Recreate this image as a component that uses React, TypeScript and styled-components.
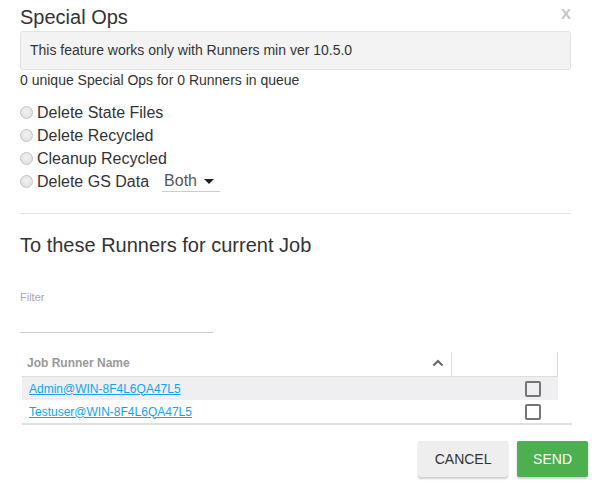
import React from 'react';
import styled, { createGlobalStyle } from 'styled-components';

const GlobalStyle = createGlobalStyle`
  html, body {
    margin: 0;
    padding: 0;
    background: #fff;
    font-family: "Liberation Sans", Arial, sans-serif;
    color: #333;
  }
`;

const Dialog = styled.div`
  position: relative;
  width: 592px;
  height: 483px;
  box-sizing: border-box;
  padding: 5px 21px 0 20px;
`;

const Title = styled.h2`
  margin: 0;
  font-size: 20px;
  font-weight: normal;
  line-height: 24px;
  color: #333;
`;

const Close = styled.span`
  position: absolute;
  top: 5px;
  right: 21px;
  font-size: 15px;
  font-weight: bold;
  line-height: 18px;
  color: #c6c6c6;
`;

const Notice = styled.div`
  margin-top: 2px;
  padding: 9px 9px;
  border: 1px solid #e3e3e3;
  border-radius: 3px;
  background: #f3f3f3;
  font-size: 14px;
  line-height: 19px;
`;

const Count = styled.div`
  font-size: 14px;
  line-height: 19px;
  margin-top: 1px;
`;

const OpList = styled.div`
  margin-top: 11px;
  display: flex;
  flex-direction: column;
`;

const OpRow = styled.label`
  display: flex;
  align-items: center;
  height: 23px;
  font-size: 16px;
`;

const Radio = styled.span`
  width: 11px;
  height: 11px;
  border-radius: 50%;
  border: 1px solid #c4c4c4;
  background: radial-gradient(circle at 50% 40%, #f2f2f2, #dcdcdc);
  margin-right: 4px;
  flex: none;
`;

const Select = styled.span`
  display: inline-flex;
  align-items: center;
  margin-left: 13px;
  padding: 0 6px 0 2px;
  height: 20px;
  border-bottom: 1px solid #ccc;
  color: #555;
  gap: 7px;
`;

const Caret = styled.span`
  width: 0;
  height: 0;
  border-left: 5px solid transparent;
  border-right: 5px solid transparent;
  border-top: 5px solid #222;
`;

const Divider = styled.hr`
  margin: 20px 0 0;
  border: none;
  border-top: 1px solid #e5e5e5;
`;

const Section = styled.h3`
  margin: 19px 0 0;
  font-size: 20px;
  font-weight: normal;
  line-height: 24px;
  color: #333;
`;

const FilterLabel = styled.div`
  margin-top: 33px;
  font-size: 11px;
  line-height: 14px;
  color: #aaa;
`;

const FilterInput = styled.div`
  margin-top: 28px;
  width: 193px;
  border-bottom: 1px solid #ccc;
`;

const Table = styled.div`
  margin: 17px 0 0 2px;
  width: 550px;
  border-bottom: 2px solid #e0e0e0;
`;

const Grid = styled.div`
  display: grid;
  grid-template-columns: 430px 106px;
`;

const HeadRow = styled(Grid)`
  height: 26px;
  width: 536px;
  border-bottom: 1px solid #ddd;
`;

const HeadCell = styled.div<{ $sep?: boolean }>`
  display: flex;
  align-items: center;
  justify-content: space-between;
  padding: 0 7px 3px 5px;
  margin-top: 2px;
  font-size: 12px;
  font-weight: bold;
  color: #999;
  border-right: ${p => (p.$sep ? '1px solid #ddd' : 'none')};
`;

const Row = styled(Grid)<{ $shade?: boolean }>`
  height: 23px;
  width: 536px;
  align-items: center;
  background: ${p => (p.$shade ? '#efeff1' : '#fff')};
`;

const RunnerLink = styled.a`
  padding-left: 7px;
  font-size: 12px;
  color: #13a3ee;
  text-decoration: underline;
`;

const Check = styled.span`
  justify-self: end;
  margin-right: 17px;
  width: 12px;
  height: 12px;
  border: 2px solid #757575;
  border-radius: 2px;
`;

const Actions = styled.div`
  position: absolute;
  right: 4px;
  bottom: 6px;
  display: flex;
  gap: 9px;
`;

const Button = styled.button<{ $primary?: boolean }>`
  height: 36px;
  padding: 0 16px;
  min-width: ${p => (p.$primary ? '70px' : '90px')};
  border: none;
  border-radius: 2px;
  font-family: inherit;
  font-size: 14px;
  text-transform: uppercase;
  background: ${p => (p.$primary ? '#4caf50' : '#eeeeee')};
  color: ${p => (p.$primary ? '#fff' : '#333')};
  box-shadow: 0 2px 2px rgba(0, 0, 0, 0.18), 0 0 1px rgba(0, 0, 0, 0.12);
`;

const ops = ['Delete State Files', 'Delete Recycled', 'Cleanup Recycled'];
const runners = ['Admin@WIN-8F4L6QA47L5', 'Testuser@WIN-8F4L6QA47L5'];

export default function App() {
  return (
    <>
      <GlobalStyle />
      <Dialog>
        <Title>Special Ops</Title>
        <Close>X</Close>
        <Notice>This feature works only with Runners min ver 10.5.0</Notice>
        <Count>0 unique Special Ops for 0 Runners in queue</Count>
        <OpList>
          {ops.map(op => (
            <OpRow key={op}>
              <Radio />
              {op}
            </OpRow>
          ))}
          <OpRow>
            <Radio />
            Delete GS Data
            <Select>
              Both
              <Caret />
            </Select>
          </OpRow>
        </OpList>
        <Divider />
        <Section>To these Runners for current Job</Section>
        <FilterLabel>Filter</FilterLabel>
        <FilterInput />
        <Table>
          <HeadRow>
            <HeadCell $sep>
              Job Runner Name
              <svg width="12" height="8" viewBox="0 0 12 8">
                <path d="M1.5 6.5 L6 2 L10.5 6.5" fill="none" stroke="#666" strokeWidth="2" />
              </svg>
            </HeadCell>
            <HeadCell $sep />
          </HeadRow>
          {runners.map((r, i) => (
            <Row key={r} $shade={i === 0}>
              <RunnerLink href="#">{r}</RunnerLink>
              <Check />
            </Row>
          ))}
        </Table>
        <Actions>
          <Button>Cancel</Button>
          <Button $primary>Send</Button>
        </Actions>
      </Dialog>
    </>
  );
}
